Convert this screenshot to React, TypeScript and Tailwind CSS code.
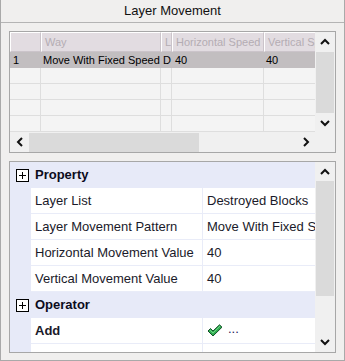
import React from "react";

const font = { fontFamily: '"Liberation Sans", Arial, sans-serif' };

function Chevron({ dir }: { dir: "up" | "down" | "left" | "right" }) {
  const d: Record<string, string> = {
    up: "M1 6 L5 2 L9 6",
    down: "M1 2 L5 6 L9 2",
    left: "M6 1 L2 5 L6 9",
    right: "M2 1 L6 5 L2 9",
  };
  const vert = dir === "up" || dir === "down";
  return (
    <svg width={vert ? 10 : 8} height={vert ? 8 : 10} viewBox={vert ? "0 0 10 8" : "0 0 8 10"}>
      <path d={d[dir]} fill="none" stroke="#111" strokeWidth={2} />
    </svg>
  );
}

function PlusBox() {
  return (
    <div className="w-[13px] h-[13px] border border-black bg-white flex items-center justify-center">
      <svg width="9" height="9" viewBox="0 0 9 9">
        <path d="M1 4.5 H8 M4.5 1 V8" stroke="#000" strokeWidth={1} />
      </svg>
    </div>
  );
}

const headers = [
  { label: "", w: "w-[31px]" },
  { label: "Way", w: "w-[120px]" },
  { label: "La", w: "w-[11px]" },
  { label: "Horizontal Speed (", w: "w-[92px]" },
  { label: "Vertical Speed", w: "w-[53px]" },
];

function DataGrid() {
  const emptyRows = [0, 1, 2, 3];
  return (
    <div className="mx-[8px] mt-[8px] h-[122px] border border-[#a7a7a7] bg-[#f4f4f4] flex flex-col overflow-hidden">
      <div className="flex h-[100px]">
        <div className="w-[307px] flex flex-col overflow-hidden">
          {/* header */}
          <div className="flex h-[20px] bg-[#e2dce1] shrink-0">
            {headers.map((h, i) => (
              <div
                key={i}
                className={`${h.w} shrink-0 h-full border border-[#cbc4ca] border-l-white border-t-white text-[11px] text-[#b4acb3] pl-[3px] leading-[18px] whitespace-nowrap overflow-hidden`}
              >
                {h.label}
              </div>
            ))}
          </div>
          {/* selected row */}
          <div className="flex h-[16px] bg-[#c2bec0] text-[11px] text-black leading-[16px] shrink-0">
            <div className="w-[31px] shrink-0 pl-[3px]">1</div>
            <div className="w-[120px] shrink-0 pl-[2px] whitespace-nowrap overflow-hidden">Move With Fixed Speed</div>
            <div className="w-[11px] shrink-0 pl-[2px] whitespace-nowrap overflow-hidden">D</div>
            <div className="w-[92px] shrink-0 pl-[3px]">40</div>
            <div className="w-[53px] shrink-0 pl-[2px]">40</div>
          </div>
          {emptyRows.map((r) => (
            <div key={r} className="flex h-[16px] border-b border-[#dedede] shrink-0">
              <div className="w-[31px] shrink-0 border-r border-[#dedede]" />
              <div className="w-[120px] shrink-0 border-r border-[#dedede]" />
              <div className="w-[11px] shrink-0 border-r border-[#dedede]" />
              <div className="w-[92px] shrink-0 border-r border-[#dedede]" />
              <div className="w-[53px] shrink-0" />
            </div>
          ))}
        </div>
        {/* vertical scrollbar */}
        <div className="w-[20px] bg-[#f0f0f0] flex flex-col">
          <div className="h-[20px] flex items-center justify-center">
            <Chevron dir="up" />
          </div>
          <div className="h-[61px] mx-[1px] bg-[#dadada]" />
          <div className="flex-1 flex items-center justify-center">
            <Chevron dir="down" />
          </div>
        </div>
      </div>
      {/* horizontal scrollbar */}
      <div className="flex h-[20px] bg-[#f0f0f0]">
        <div className="w-[307px] flex items-center">
          <div className="w-[19px] flex justify-center">
            <Chevron dir="left" />
          </div>
          <div className="w-[170px] h-[19px] bg-[#dadada]" />
          <div className="flex-1" />
          <div className="w-[19px] flex justify-center">
            <Chevron dir="right" />
          </div>
        </div>
        <div className="w-[20px] bg-[#f0f0f0]" />
      </div>
    </div>
  );
}

function Category({ label }: { label: string }) {
  return (
    <div className="flex h-[26px] bg-[#e7eaf8] items-center shrink-0">
      <div className="w-[24px] flex justify-center pl-[1px]">
        <PlusBox />
      </div>
      <div className="pl-[1px] text-[13px] font-bold text-[#0c0c1c]">{label}</div>
    </div>
  );
}

function Row({ label, value, bold }: { label: string; value: React.ReactNode; bold?: boolean }) {
  return (
    <div className="flex h-[26px] shrink-0 bg-[#e7eaf8]">
      <div className="w-[21px] shrink-0" />
      <div className="flex-1 flex bg-white border-b border-[#e9ecf8]">
        <div
          className={`w-[172px] shrink-0 border-r border-[#e9ecf8] pl-[4px] text-[13px] leading-[25px] text-[#1a1a2a] whitespace-nowrap overflow-hidden ${bold ? "font-bold" : ""}`}
        >
          {label}
        </div>
        <div className="flex-1 pl-[4px] text-[13px] leading-[25px] text-[#1a1a2a] whitespace-nowrap overflow-hidden">
          {value}
        </div>
      </div>
    </div>
  );
}

function Check() {
  return (
    <svg width="16" height="13" viewBox="0 0 16 13" className="inline-block align-middle">
      <path d="M1 7 L3.5 4.5 L6 7 L12.5 0.8 L15 3.2 L6 12 Z" fill="#2fae4f" stroke="#14502a" strokeWidth={1} strokeLinejoin="round" />
      <path d="M3 6 L6 9 L13 2" fill="none" stroke="#7fdc95" strokeWidth={0.8} />
    </svg>
  );
}

function PropertyGrid() {
  return (
    <div className="mx-[8px] mt-[8px] h-[192px] border border-[#a7a7a7] bg-white flex overflow-hidden">
      <div className="w-[307px] flex flex-col overflow-hidden">
        <Category label="Property" />
        <Row label="Layer List" value="Destroyed Blocks" />
        <Row label="Layer Movement Pattern" value="Move With Fixed Speed" />
        <Row label="Horizontal Movement Value" value="40" />
        <Row label="Vertical Movement Value" value="40" />
        <Category label="Operator" />
        <Row
          label="Add"
          bold
          value={
            <span className="inline-flex items-center gap-[5px] h-full">
              <Check />
              <span className="text-[#1a1a5a] relative top-[-2px]">...</span>
            </span>
          }
        />
        <Row label="" value="" />
      </div>
      <div className="w-[20px] bg-[#f0f0f0] flex flex-col">
        <div className="h-[19px] flex items-center justify-center">
          <Chevron dir="up" />
        </div>
        <div className="h-[115px] mx-[1px] bg-[#dadada]" />
        <div className="flex-1" />
        <div className="h-[20px] flex items-center justify-center">
          <Chevron dir="down" />
        </div>
      </div>
    </div>
  );
}

export default function App() {
  return (
    <div style={font} className="w-[345px] h-[361px] bg-[#f0efee] border-x border-b border-[#a9a9a9] flex flex-col">
      <div className="h-[23px] border-b border-[#b4b4b4] flex items-center justify-center text-[13px] text-[#111]">
        Layer Movement
      </div>
      <DataGrid />
      <PropertyGrid />
    </div>
  );
}
